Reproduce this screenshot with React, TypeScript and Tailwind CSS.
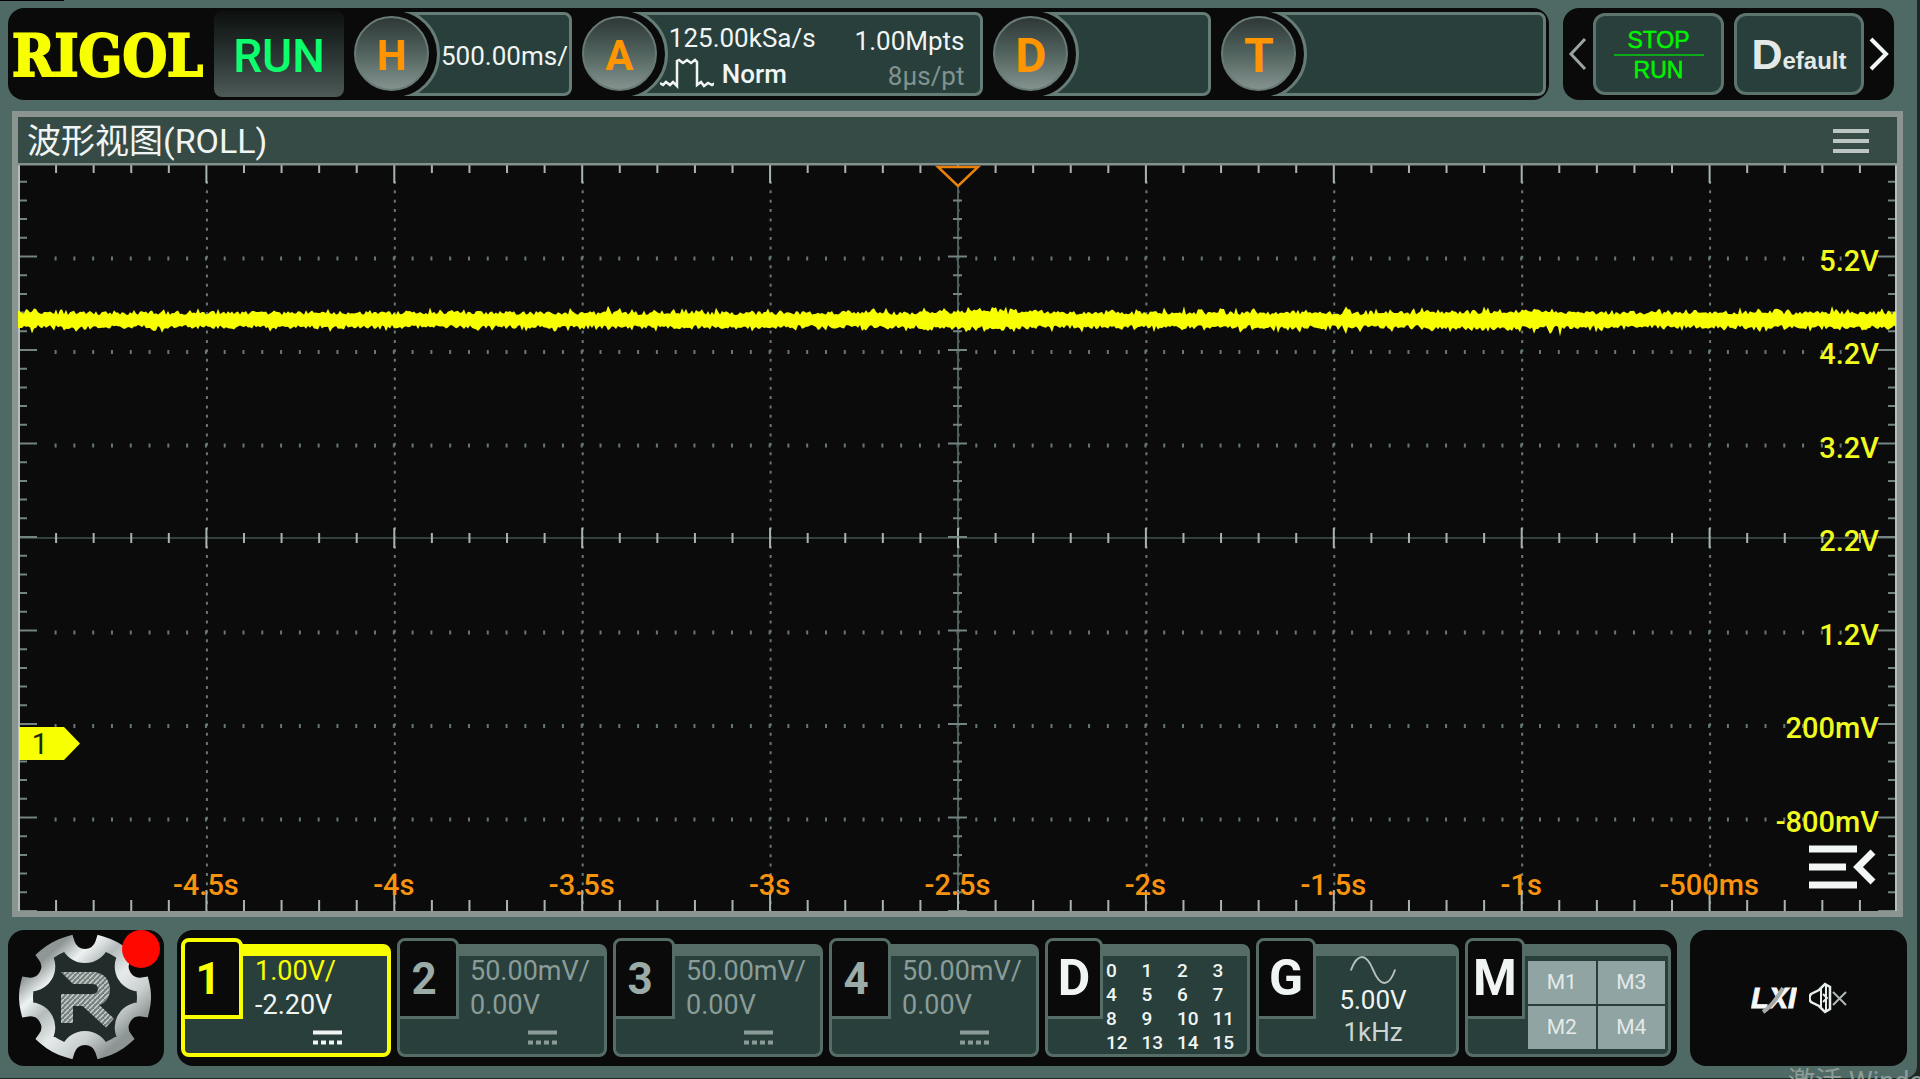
import type { ReactNode } from "react";
import clsx from "clsx";

const CHART_W = 1879;
const CHART_H = 748;
const COLS = 10;
const ROWS = 8;
const DIV_X = CHART_W / COLS;
const DIV_Y = CHART_H / ROWS;

const voltLabels = ["5.2V", "4.2V", "3.2V", "2.2V", "1.2V", "200mV", "-800mV"];
const timeLabels = ["-4.5s", "-4s", "-3.5s", "-3s", "-2.5s", "-2s", "-1.5s", "-1s", "-500ms"];

const range = (n: number) => Array.from({ length: n }, (_, i) => i);

// small LCG so the noise on the trace is the same on every render
function buildTrace() {
    let seed = 4217;
    const rand = () => {
        seed = (seed * 1664525 + 1013904223) % 4294967296;
        return seed / 4294967296;
    };
    const mid = 157;
    const edge = (busy: number) =>
        5 + rand() * 4 + (rand() > 0.75 ? rand() * 4 : 0) + (rand() > 0.95 ? rand() * (5 + busy) : 0) + busy * rand() * 0.6;
    const top: string[] = [];
    const bottom: string[] = [];
    for (let x = 0; x <= CHART_W; x += 2) {
        const busy = (x > 900 && x < 1020) || (x > 1400 && x < 1540) ? 4 : 0;
        top.push(`${x},${(mid - edge(busy)).toFixed(1)}`);
        bottom.unshift(`${x},${(mid + edge(busy)).toFixed(1)}`);
    }
    return [...top, ...bottom].join(" ");
}

const trace = buildTrace();

function buildGear() {
    const point = (deg: number) => {
        const a = (deg * Math.PI) / 180;
        return `${(66 + 59 * Math.cos(a)).toFixed(1)} ${(63 + 56 * Math.sin(a)).toFixed(1)}`;
    };
    let d = `M${point(-107)}`;
    for (let i = 0; i < 6; i++) {
        const at = -90 + i * 60;
        d += ` A18 18 0 0 0 ${point(at + 17)} A59 56 0 0 1 ${point(at + 43)}`;
    }
    return d + "Z";
}

const gear = buildGear();

function Chip({ letter, big, className, children }: {
    letter: string;
    big?: boolean;
    className: string;
    children?: ReactNode;
}) {
    return (
        <div className={clsx("relative h-[84px] min-w-0", className)}>
            <div className="ml-10 h-full rounded-r-lg border-3 border-[#667c76] bg-[#283f3b] pl-[44px]">
                {children}
            </div>
            {/* round cut-out between the knob and the box */}
            <div className="absolute inset-y-0 left-10 w-[46px] overflow-hidden">
                <div className="absolute -top-1 right-0 size-[92px] rounded-full border-3 border-[#667c76] bg-[#0a0a0a]" />
            </div>
            <button
                className={clsx(
                    "absolute top-1 left-0 flex size-[75px] items-center justify-center rounded-full border-2 border-[#687a76] bg-linear-to-b from-[#2f3837] via-[#52645f] to-[#85938f] pt-1 font-bold text-[#ff9500]",
                    big ? "text-[48px]" : "text-[42px]"
                )}
            >
                {letter}
            </button>
        </div>
    );
}

function Tile({ label, active, bright, tab, className, children }: {
    label: string;
    active?: boolean;
    bright?: boolean;
    tab: string;
    className: string;
    children: ReactNode;
}) {
    return (
        <div className={clsx("relative min-w-0 pt-[6px]", className)}>
            <div
                className={clsx(
                    "h-[113px] rounded-lg border-t-[12px] bg-[#283f3b]",
                    active ? "border-4 border-t-[12px] border-[#f8ff00]" : "border-3 border-t-[12px] border-[#566d67]"
                )}
            >
                {children}
            </div>
            <button
                className={clsx(
                    "absolute top-0 left-0 h-[81px] rounded-t-lg bg-[#0a0a0a] font-bold",
                    tab,
                    active ? "border-4 border-[#f8ff00] text-[#f8ff00]" : "border-3 border-[#566d67]",
                    !active && (bright ? "text-[#f0f5f4]" : "text-[#9aaba8]"),
                    bright ? "text-center text-[50px]" : "pr-2 text-center text-[44px]"
                )}
            >
                {label}
            </button>
        </div>
    );
}

function Channel({ n, scale, offset, active }: { n: string; scale: string; offset: string; active?: boolean }) {
    return (
        <Tile label={n} active={active} tab="w-[62px]" className="flex-[210]">
            <div
                className={clsx(
                    "-mt-[2px] pl-[70px] text-[27px] leading-[34px] whitespace-nowrap",
                    active ? "text-[#f0f5f4]" : "text-[#8b9c98]"
                )}
            >
                <div className={clsx(active && "text-[#f8ff00]")}>{scale}</div>
                <div>{offset}</div>
                <svg className="mt-2 ml-[58px]" width="30" height="16" viewBox="0 0 30 16">
                    <path d="M0 2.5H29" stroke="currentColor" strokeWidth="4" />
                    <path d="M0 12.5H29" stroke="currentColor" strokeWidth="4" strokeDasharray="5 3" />
                </svg>
            </div>
        </Tile>
    );
}

function Chart() {
    return (
        <svg
            className="block h-auto w-full bg-[#0b0b0b]"
            viewBox={`0 0 ${CHART_W} ${CHART_H}`}
            fontFamily="Roboto, sans-serif"
            fontSize="29"
            fontWeight="500"
        >
            {/* dotted grid */}
            <g stroke="#66777a" fill="none">
                {range(COLS - 1).map((i) => (
                    <path key={i} d={`M${(i + 1) * DIV_X + 1} 18V${CHART_H}`} strokeWidth="2" strokeDasharray="3 6.35" />
                ))}
                {range(ROWS - 1).filter((i) => i !== 3).map((i) => (
                    <path key={i} d={`M36.6 ${(i + 1) * DIV_Y + 2}H1840`} strokeWidth="4" strokeDasharray="2 16.79" />
                ))}
            </g>
            {/* centre axes */}
            <path d={`M0 ${CHART_H / 2 + 1}H${CHART_W}`} stroke="#33413e" strokeWidth="2" />
            <path d={`M${CHART_W / 2 + 0.5} 0V${CHART_H}`} stroke="#4c5d5d" strokeWidth="2" />
            {/* ticks */}
            <g stroke="#a9b4b1" strokeWidth="2">
                {range(COLS * 5 + 1).map((i) => {
                    const x = (i * DIV_X) / 5 + 0.5;
                    const len = i % 5 === 0 ? 20 : 10;
                    return (
                        <path
                            key={i}
                            d={`M${x} 0v${len}M${x} ${CHART_H}v${-len - 1}M${x} ${CHART_H / 2 + 1 - len / 2}v${len}`}
                        />
                    );
                })}
            </g>
            <g stroke="#748481" strokeWidth="2">
                {range(ROWS * 5 + 1).map((i) => {
                    const y = (i * DIV_Y) / 5;
                    const len = i % 5 === 0 ? 19 : 9;
                    return (
                        <path
                            key={i}
                            d={`M0 ${y}h${len}M${CHART_W} ${y}h${-len}M${CHART_W / 2 - len / 2} ${y}h${len}`}
                        />
                    );
                })}
            </g>
            <path d={`M1 0V${CHART_H}M${CHART_W - 1} 0V${CHART_H}`} stroke="#b4bebb" strokeWidth="2" />
            <path d={`M0 1H${CHART_W}`} stroke="#84928e" strokeWidth="3" />

            <polygon points={trace} fill="#f8ff00" />

            <g fill="#f0fa1e" textAnchor="end">
                {voltLabels.map((label, i) => (
                    <text key={label} x="1861" y={(i + 1) * DIV_Y + 14}>{label}</text>
                ))}
            </g>
            <g fill="#f8930f" textAnchor="middle">
                {timeLabels.map((label, i) => (
                    <text key={label} x={(i + 1) * DIV_X} y="732">{label}</text>
                ))}
            </g>

            {/* trigger position */}
            <path d="M920 4H960L940 23Z" fill="#0b0b0b" stroke="#e8820c" strokeWidth="2.5" />

            {/* channel 1 zero level */}
            <path d="M1 564H46L62 580.500L46 597H1Z" fill="#f8ff00" />
            <text x="22" y="591" fill="#1c2a14" textAnchor="middle" fontWeight="400">1</text>

            {/* side menu handle */}
            <g stroke="#f2f6f5" strokeWidth="7" fill="none">
                <path d="M1791 686H1839M1791 704H1828M1791 722H1839" />
                <path d="M1855 689L1840 704L1855 719" />
            </g>
        </svg>
    );
}

export default function App() {
    return (
        <div className="relative min-h-screen overflow-hidden bg-[#1f2725] pr-[3px] pb-[2px] font-[family-name:Roboto,'Noto_Sans_CJK_SC',sans-serif] text-[#f0f5f4]">
            <div className="rounded-br-xl bg-[#4f6a64] pt-2 pb-3">
                <header className="flex gap-[14px] pr-[23px] pl-2">
                    <div className="flex h-[92px] min-w-0 flex-1 items-center gap-[10px] rounded-2xl bg-[#0a0a0a] pr-[3px] whitespace-nowrap">
                        <div className="w-[196px] shrink-0 pt-[2px] pl-1 font-[family-name:'DejaVu_Serif_Condensed','DejaVu_Serif',serif] text-[57px] leading-none font-bold text-[#f8ff00] [font-stretch:condensed] [-webkit-text-stroke:2px_#f8ff00]">
                            RIGOL
                        </div>
                        <button className="h-[86px] w-[130px] shrink-0 rounded-lg bg-linear-to-b from-[#0d100f] via-[#293432] to-[#4d5a57] pt-1 text-[46px] font-medium text-[#0cff6c]">
                            RUN
                        </button>
                        <Chip letter="H" className="flex-[218]">
                            <div className="pt-px text-[26px] leading-[80px]">500.00ms/</div>
                        </Chip>
                        <Chip letter="A" className="flex-[402]">
                            <div className="flex h-full justify-between pr-4 text-[26px]">
                                <div className="pt-[7px] leading-[32px]">
                                    <div>125.00kSa/s</div>
                                    <div className="-ml-[9px] flex items-center gap-2 pt-1">
                                        <svg width="54" height="32" viewBox="0 0 54 32" fill="none" stroke="currentColor" strokeWidth="2.500">
                                            <path d="M0 25l3 2 3-3 4 3 3-3 4 4V3l2-1 4 3 4-3 4 3 4-3 2 2V27l4-3 3 4 4-3 4 2 3-2" />
                                        </svg>
                                        <span className="font-medium">Norm</span>
                                    </div>
                                </div>
                                <div className="pt-[9px] text-right leading-[35px]">
                                    <div>1.00Mpts</div>
                                    <div className="text-[#82938f]">8µs/pt</div>
                                </div>
                            </div>
                        </Chip>
                        <Chip letter="D" big className="flex-[218]" />
                        <Chip letter="T" big className="flex-[325]" />
                    </div>

                    <div className="flex h-[92px] w-[331px] items-center rounded-2xl bg-[#0a0a0a] font-[family-name:'Liberation_Sans',sans-serif]">
                        <button aria-label="Previous" className="flex w-[30px] justify-center">
                            <svg width="20" height="34" viewBox="0 0 20 34" fill="none" stroke="#9aa5a2" strokeWidth="3">
                                <path d="M17 2L3 17l14 15" />
                            </svg>
                        </button>
                        <button className="flex h-[82px] w-[131px] flex-col items-center justify-center rounded-xl border-3 border-[#5d746e] bg-[#283f3b] pt-[2px] text-[23px] leading-[24px] text-[#00f400] [-webkit-text-stroke:0.5px_#00f400]">
                            <span>STOP</span>
                            <span className="my-[2px] h-[2px] w-[90px] bg-[#10a81a]" />
                            <span>RUN</span>
                        </button>
                        <button className="ml-[10px] flex h-[82px] w-[130px] items-baseline justify-center rounded-xl border-3 border-[#5d746e] bg-[#283f3b] pt-[10px] text-[24px] leading-[56px] font-bold text-[#e4e9e8]">
                            <span className="text-[43px]">D</span>efault
                        </button>
                        <button aria-label="Next" className="flex w-[30px] justify-center">
                            <svg width="20" height="34" viewBox="0 0 20 34" fill="none" stroke="#f2f6f5" strokeWidth="4">
                                <path d="M2 2l15 15L2 32" />
                            </svg>
                        </button>
                    </div>
                </header>

                <main className="mt-[11px] mr-[14px] ml-3 border-6 border-[#8b9490]">
                    <div className="flex h-[46px] items-center justify-between bg-[#374b46] pt-[2px] pr-7 pl-[9px]">
                        <h1 className="text-[34px] leading-[44px]">波形视图(ROLL)</h1>
                        <button aria-label="Menu">
                            <svg width="36" height="26" viewBox="0 0 36 26" stroke="#bcc5c2" strokeWidth="4">
                                <path d="M0 3H36M0 13H36M0 23H36" />
                            </svg>
                        </button>
                    </div>
                    <Chart />
                </main>

                <footer className="mt-[13px] flex h-[136px] gap-[13px] pr-[10px] pl-2">
                    <button aria-label="Start menu" className="relative w-[156px] rounded-2xl bg-[#0a0a0a]">
                        <svg className="absolute top-1 left-[11px]" width="132" height="128" viewBox="0 0 132 128">
                            <defs>
                                <linearGradient id="rim" x1="0" y1="0" x2="1" y2="1">
                                    <stop offset="0.15" stopColor="#8f9696" />
                                    <stop offset="0.28" stopColor="#eef2f2" />
                                    <stop offset="0.4" stopColor="#b4bbba" />
                                    <stop offset="0.55" stopColor="#e6eaea" />
                                    <stop offset="0.7" stopColor="#c9d0cf" />
                                    <stop offset="0.85" stopColor="#8d9494" />
                                </linearGradient>
                                <pattern id="hatch" width="5" height="5" patternUnits="userSpaceOnUse">
                                    <rect width="5" height="5" fill="#76807e" />
                                    <path d="M0 5L5 0" stroke="#c9d0ce" strokeWidth="1.500" />
                                </pattern>
                            </defs>
                            <path d={gear} fill="#222c2a" stroke="url(#rim)" strokeWidth="14" />
                            {/* emblem: a folded ribbon with a foot and a tail */}
                            <path d="M42 38L54 50H60V38Z" fill="url(#hatch)" />
                            <path
                                d="M58 44H74Q85 45 85 56Q84 65 75 66H48V89M66 66L91 89"
                                fill="none"
                                stroke="url(#hatch)"
                                strokeWidth="12"
                            />
                        </svg>
                        <span className="absolute top-0 right-1 size-[38px] rounded-full bg-[#ff0800]" />
                    </button>

                    <div className="flex min-w-0 flex-1 gap-[6px] rounded-2xl bg-[#0a0a0a] pt-2 pr-[6px] pl-1">
                        <Channel n="1" scale="1.00V/" offset="-2.20V" active />
                        <Channel n="2" scale="50.00mV/" offset="0.00V" />
                        <Channel n="3" scale="50.00mV/" offset="0.00V" />
                        <Channel n="4" scale="50.00mV/" offset="0.00V" />
                        <Tile label="D" bright tab="w-[58px]" className="flex-[205]">
                            <div className="ml-[58px] grid w-[142px] grid-cols-4 pt-[3px] text-[19px] leading-[24px] font-medium">
                                {range(16).map((i) => (
                                    <span key={i}>{i}</span>
                                ))}
                            </div>
                        </Tile>
                        <Tile label="G" bright tab="w-[60px]" className="flex-[203]">
                            <div className="ml-[57px] flex w-[114px] flex-col items-center text-[26px] leading-[32px]">
                                <svg width="48" height="28" viewBox="0 0 48 29" fill="none" stroke="#b4c0bd" strokeWidth="2">
                                    <path d="M1 15C8 -4 17 -3 24 14S40 34 47 14" />
                                </svg>
                                <span>5.00V</span>
                                <span className="text-[#cbd5d2]">1kHz</span>
                            </div>
                        </Tile>
                        <Tile label="M" bright tab="w-[60px]" className="flex-[206]">
                            <div className="ml-[60px] grid grid-cols-2 gap-[2px] pt-[5px] pr-[3px] text-center text-[21px] leading-[43px] text-[#e3eae8]">
                                {["M1", "M3", "M2", "M4"].map((m) => (
                                    <span key={m} className="bg-[#90a4a3]">{m}</span>
                                ))}
                            </div>
                        </Tile>
                    </div>

                    <div className="flex w-[217px] items-center justify-center gap-3 rounded-2xl bg-[#0a0a0a]">
                        <svg width="46" height="32" viewBox="0 0 46 32">
                            <text x="0" y="26" fontFamily="Liberation Sans, sans-serif" fontSize="29" fontWeight="700" fontStyle="italic" fill="#f5f8f7" stroke="#f5f8f7">
                                LXI
                            </text>
                            <path d="M32 6C28 13 21 24 12 30" stroke="#a3a9a8" strokeWidth="4" fill="none" />
                        </svg>
                        <svg width="38" height="32" viewBox="0 0 38 32" fill="none" stroke="#e8eeec" strokeWidth="2.500">
                            <path d="M2 12L10 8L16 2L21 5V27L16 30L10 24L2 20Q-1 16 2 12Z" />
                            <path d="M12 7V25M17 3V29M14 12l4 4-4 4" strokeWidth="2" />
                            <path d="M24 10L37 23M37 10L24 23" stroke="#aeb8b5" strokeWidth="2" />
                        </svg>
                    </div>
                </footer>
            </div>
            <div className="absolute top-0 left-0 h-px w-16 bg-black" />
            <div className="absolute right-0 bottom-0 h-[12px] w-[132px] overflow-hidden text-[27px] leading-[28px] whitespace-nowrap text-[#8d9c98]">
                激活 Windows
            </div>
        </div>
    );
}
